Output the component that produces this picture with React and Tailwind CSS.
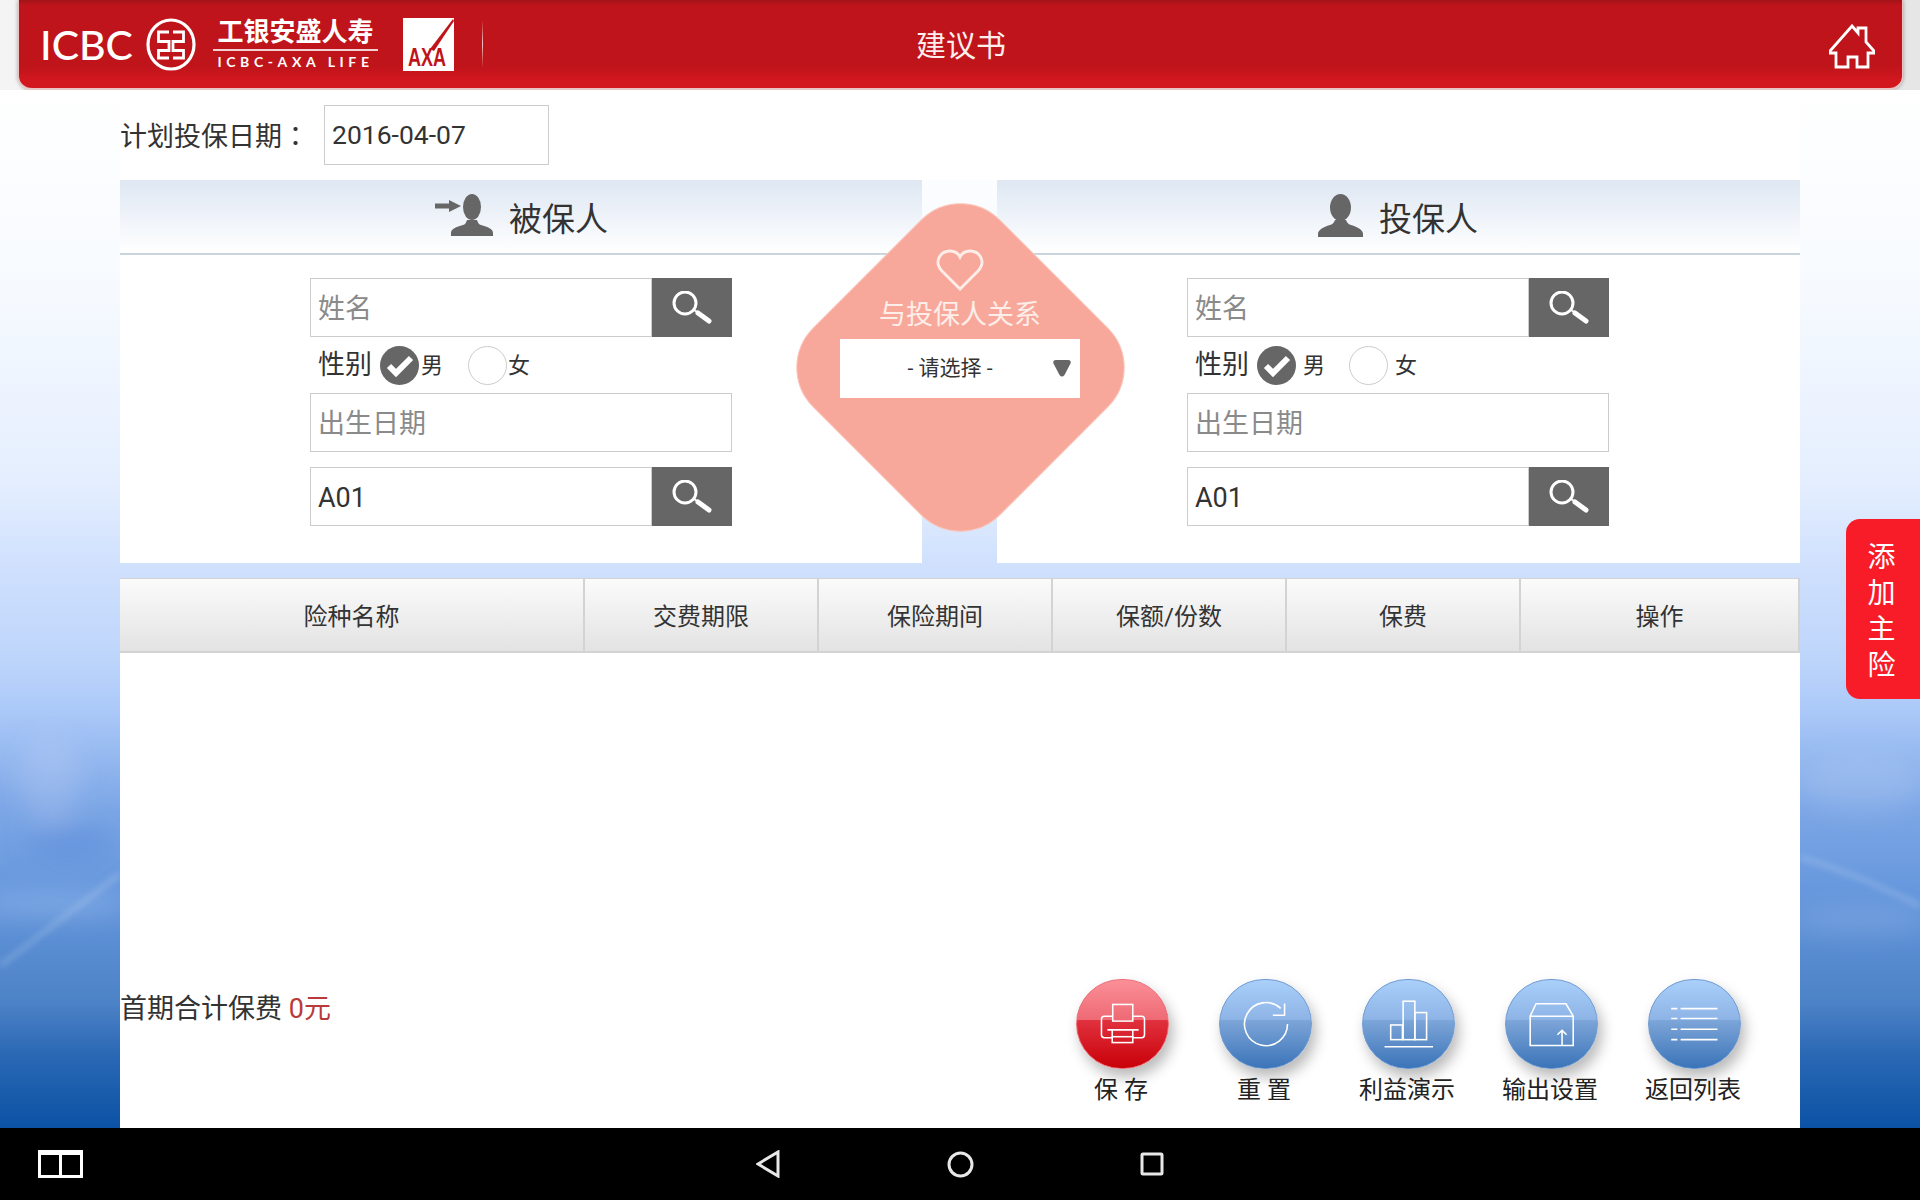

const Person = ({ className }) => (
  <svg viewBox="0 0 45 43" className={className} fill="#666">
    <ellipse cx="22.5" cy="13.5" rx="10.5" ry="13.5" />
    <path d="M0 43v-3c0-4 5-7 12-9c2-.5 4-2 5-5h11c1 3 3 4.500 5 5c7 2 12 5 12 9v3z" />
  </svg>
);
const SearchIcon = () => (
  <svg viewBox="0 0 40 34" className="w-[40px] h-[34px]" fill="none" stroke="#fff" strokeLinecap="round">
    <circle cx="13" cy="12" r="11" strokeWidth="3" />
    <path d="M22 19l4 2.5" strokeWidth="2" />
    <path d="M26 22l11 8" strokeWidth="5" />
  </svg>
);
const Input = ({ children, muted, search }) => (
  <div className="flex h-[59px] w-full">
    <div className={`flex-1 h-full border border-[#ccc] bg-white flex items-center pl-[7px] pt-[3px] text-[27px] ${muted ? "text-[#8a8a8a]" : "text-[#333]"}`}>{children}</div>
    {search && <div className="w-[80px] h-full bg-[#666] flex items-center justify-center"><SearchIcon /></div>}
  </div>
);
const Check = () => (
  <div className="w-[39px] h-[39px] rounded-full bg-[#666] flex items-center justify-center shrink-0">
    <svg viewBox="0 0 28 24" className="w-[28px] h-[24px]" fill="none" stroke="#fff" strokeWidth="6"><path d="M3 12l7 7L25 4" /></svg>
  </div>
);
const Form = ({ gap1, gap2, gap3 }) => (
  <div className="pl-[190px] pt-[23px] w-[612px]">
    <Input muted search>姓名</Input>
    <div className="flex items-center h-[39px] mt-[9px] pl-[8px] text-[#333]">
      <span className="text-[27px] w-[53px] shrink-0 leading-none whitespace-nowrap">性别</span>
      <span className={gap1}><Check /></span>
      <span className={`text-[22px] leading-none ${gap2}`}>男</span>
      <span className="w-[39px] h-[39px] rounded-full border border-[#ccc] bg-white shrink-0" />
      <span className={`text-[22px] leading-none ${gap3}`}>女</span>
    </div>
    <div className="mt-[8px]"><Input muted>出生日期</Input></div>
    <div className="mt-[15px]"><Input search>A01</Input></div>
  </div>
);
const Circle = ({ red, children, label }) => (
  <div className="w-[93px] flex flex-col items-center">
    <div className={`w-[93px] h-[90px] rounded-full border shadow-[4px_8px_14px_rgba(0,0,0,0.28)] overflow-hidden ${red
      ? "border-[#e8707a] bg-[linear-gradient(180deg,#fb8f98_0%,#ee6a74_45%,#e1323f_45%,#c90008_100%)]"
      : "border-[#6f9ad0] bg-[linear-gradient(180deg,#a9cffa_0%,#8db4e6_45%,#7ea6d9_45%,#3b74b8_100%)]"}`}>
      <svg viewBox="0 0 93 90" className="w-full h-full" fill="none" stroke="#fff" strokeWidth="1.6">{children}</svg>
    </div>
    <div className="mt-[5px] -ml-[3px] text-[24px] leading-[32px] text-[#222] whitespace-nowrap">{label}</div>
  </div>
);
const cols = [["险种名称", 465], ["交费期限", 234], ["保险期间", 234], ["保额/份数", 234], ["保费", 234], ["操作", 279]];

export default function App() {
  return (
    <div className="w-[1920px] h-[1200px] relative flex flex-col overflow-hidden font-['Roboto','Noto_Sans_CJK_SC',sans-serif]">
      <header className="h-[90px] shrink-0 bg-[linear-gradient(90deg,#f4f4f4,#e6e6e6_70%,#e6e6e6)] pl-[18px] pr-[17px] flex">
        <div className="flex-1 relative h-[90px] rounded-b-[14px] border-b-2 border-x border-[#e8c4c4] shadow-[0_0_4px_rgba(0,0,0,0.35)] bg-[linear-gradient(180deg,#a11318_0%,#bf141b_6%,#c0141b_76%,#d3171f_92%,#d3171f_100%)] flex items-center">
          <span className="ml-[21px] w-[92px] shrink-0 text-[41px] leading-none font-medium font-['Lato',sans-serif] text-white whitespace-nowrap">ICBC</span>
          <svg viewBox="0 0 50 53" className="ml-[14px] w-[50px] h-[53px]" fill="none" stroke="#fff">
            <ellipse cx="25" cy="26.5" rx="23" ry="24.5" strokeWidth="3.2" />
            <path d="M23 14H12.500V23.500H23V32.500H12.500V40H23M27 14H37.500V23.500H27V32.500H37.500V40H27" strokeWidth="2.8" />
          </svg>
          <div className="ml-[17px] w-[165px] flex flex-col items-center text-white">
            <span className="text-[26px] leading-[28px] font-bold whitespace-nowrap">工银安盛人寿</span>
            <span className="w-full h-[2px] bg-[#f0d0d0] mt-[3px]" />
            <span className="text-[14px] leading-[16px] mt-[3px] tracking-[4.6px] whitespace-nowrap font-bold font-['Lato',sans-serif]">ICBC-AXA LIFE</span>
          </div>
          <div className="ml-[25px] w-[51px] h-[53px] bg-white relative">
            <svg viewBox="0 0 51 53" className="w-full h-full overflow-visible">
              <path d="M50 1L27 31l4 2L51 3z" fill="#c0141b" />
              <text x="5" y="48" fontSize="26" fontWeight="700" textLength="38" lengthAdjust="spacingAndGlyphs" fill="#c0141b" fontFamily="Liberation Sans">AXA</text>
            </svg>
          </div>
          <div className="ml-[28px] w-px h-[48px] bg-[linear-gradient(180deg,#c0141b,#f2c8ca,#c0141b)]" />
          <div className="absolute left-[897px] top-[27px] text-[30px] leading-[38px] text-[#fdeeee]">建议书</div>
          <svg viewBox="0 0 46 45" className="absolute right-[27px] top-[24px] w-[46px] h-[45px]" fill="none" stroke="#fff" strokeWidth="2.8">
            <path d="M23 2L29 9V4H37V18L45 27V29H39V43H28V33H19V43H7V29H1V27Z" />
          </svg>
        </div>
      </header>

      <main className="flex-1 relative px-[120px] flex flex-col bg-[linear-gradient(180deg,#ffffff_0%,#f6faff_20%,#e4eefe_38%,#cfe0fd_46%,#bdd5fb_55%,#aac8f8_60%,#7da7e6_69%,#6496dc_78%,#4c82c6_88%,#2a68b4_93%,#0b52a5_100%)]">
        <svg className="absolute inset-0 w-[1920px] h-[1038px]" viewBox="0 0 1920 1038" fill="none">
          <defs><filter id="b"><feGaussianBlur stdDeviation="12" /></filter><filter id="c"><feGaussianBlur stdDeviation="3" /></filter></defs>
          <g filter="url(#b)">
            <ellipse cx="50" cy="690" rx="30" ry="45" fill="#dbe6fb" opacity="0.18" />
            <ellipse cx="70" cy="752" rx="45" ry="16" fill="#4f82d8" opacity="0.35" />
            <ellipse cx="50" cy="815" rx="80" ry="12" fill="#dbe6fb" opacity="0.22" />
            <ellipse cx="1860" cy="695" rx="60" ry="28" fill="#dbe6fb" opacity="0.16" />
            <ellipse cx="1860" cy="830" rx="70" ry="14" fill="#dbe6fb" opacity="0.15" />
          </g>
          <g filter="url(#c)" stroke="#e4edfb" strokeWidth="5" opacity="0.22">
            <path d="M0 876L120 784" />
            <path d="M1800 767Q1860 785 1920 816" />
          </g>
        </svg>

        <div className="relative h-[90px] shrink-0 bg-white flex items-center text-[27px] text-[#333]">
          <span className="w-[204px] pt-[2px] leading-none whitespace-nowrap">计划投保日期<span className="font-['Noto_Sans_CJK_TC']">：</span></span>
          <div className="w-[225px] h-[60px] border border-[#ccc] flex items-center pl-[7px] text-[26.5px]">2016-04-07</div>
        </div>

        <div className="relative h-[383px] shrink-0 flex justify-between">
          <section className="w-[802px] bg-white">
            <div className="h-[75px] border-b-2 border-[#cbd5df] bg-[linear-gradient(180deg,#dee7f3,#ffffff)] flex items-center pl-[315px]">
              <svg viewBox="0 0 58 42" className="w-[58px] h-[42px] -mt-[4px]" fill="#666">
                <path d="M0 9.500h14V6l12 6-12 6v-3.500H0z" />
                <ellipse cx="37" cy="13" rx="9" ry="13" />
                <path d="M16 42v-3c0-4 5-6 12-8c2-.5 3-2 4-5h10c1 3 2 4.500 4 5c7 2 12 4 12 8v3z" />
              </svg>
              <span className="ml-[16px] pt-[5px] text-[33px] leading-none text-[#333]">被保人</span>
            </div>
            <Form gap1="ml-[9px]" gap2="ml-[2px] w-[47px]" gap3="ml-[1px]" />
          </section>
          <section className="w-[803px] bg-white">
            <div className="h-[75px] border-b-2 border-[#cbd5df] bg-[linear-gradient(180deg,#dee7f3,#ffffff)] flex items-center pl-[321px]">
              <Person className="w-[45px] h-[43px] -mt-[3px]" />
              <span className="ml-[16px] pt-[5px] text-[33px] leading-none text-[#333]">投保人</span>
            </div>
            <Form gap1="ml-[9px]" gap2="ml-[7px] w-[46px]" gap3="ml-[7px]" />
          </section>
        </div>

        <div className="h-[15px] shrink-0" />

        <div className="relative flex-1 flex flex-col bg-white">
          <div className="flex h-[75px] shrink-0">
            {cols.map(([t, w]) => (
              <div key={t} style={{ width: w }} className="h-full pt-[3px] border-t border-b-2 border-r-2 border-[#d3d3d3] bg-[linear-gradient(180deg,#fbfbfb,#e3e3e3)] flex items-center justify-center text-[24px] text-[#333]">{t}</div>
            ))}
          </div>
          <div className="flex-1" />
          <div className="h-[149px] flex shrink-0">
            <div className="mt-[12px] text-[27px] leading-[36px] text-[#333] whitespace-nowrap">
              首期合计保费 <span className="text-[#b93a3a]">0元</span>
            </div>
            <div className="ml-auto mr-[59px] flex gap-[50px]">
              <Circle red label="保 存">
                <rect x="36.5" y="25" width="20.5" height="17" />
                <path d="M36 37H28q-3 0-3 3V56q0 3 3 3H36M57 37H66q3 0 3 3V56q0 3-3 3H57" />
                <path d="M31 51H63M36 51v7M57 51v7" />
                <rect x="36" y="58" width="21" height="6" />
              </Circle>
              <Circle label="重 置">
                <path d="M62 29A22 22 0 1 0 69 45" />
                <path d="M54 36H66V24" />
              </Circle>
              <Circle label="利益演示">
                <rect x="28.3" y="46" width="12" height="15" />
                <rect x="41" y="21.7" width="12" height="39.3" />
                <rect x="53" y="33.3" width="12" height="27.7" />
                <path d="M22 68.3H71.6" />
              </Circle>
              <Circle label="输出设置">
                <path d="M24.7 37H68.7V67H24.7ZM24.7 37L30.7 24.3H61.3L68.7 37" />
                <path d="M57.3 67V52M52.5 56L57.3 51.5L62 56" />
              </Circle>
              <Circle label="返回列表">
                <path d="M22.7 29.3H29M32.3 29.3H70M22.7 39.3H29M32.3 39.3H70M22.7 50.3H29M32.3 50.3H70M22.7 61H29M32.3 61H70" />
              </Circle>
            </div>
          </div>
        </div>

        <div className="absolute left-[795px] top-[113px] w-[330px] h-[328px] flex items-center justify-center">
          <div className="absolute w-[265px] h-[265px] rotate-45 rounded-[56px] bg-[#f8a89a] border border-[#fbc4ba]" />
          <div className="relative flex flex-col items-center h-[328px] w-full">
            <svg viewBox="0 0 48 42" className="mt-[46px] w-[48px] h-[42px]" fill="none" stroke="#fdeeea" strokeWidth="2.8">
              <path d="M24 40L6 22C-3 12 5 2 14 2c4 0 8 2 10 6c2-4 6-6 10-6c9 0 17 10 8 20Z" />
            </svg>
            <div className="mt-[8px] text-[27px] leading-[32px] text-[#fdeeea] whitespace-nowrap">与投保人关系</div>
            <div className="mt-[8px] w-[240px] h-[59px] bg-white relative flex items-center justify-center text-[21px] text-[#333] pr-[20px]">
              - 请选择 -
              <svg viewBox="0 0 18 17" className="absolute right-[9px] top-[21px] w-[18px] h-[17px]" fill="#666"><path d="M3 0H15Q18.500 0 17.500 3.500L11.500 15Q9 18 6.500 15L0.500 3.500Q-.5 0 3 0Z" /></svg>
            </div>
          </div>
        </div>
      </main>

      <div className="absolute right-0 top-[519px] w-[74px] h-[180px] rounded-l-[14px] bg-[#f81c28] flex flex-col items-center justify-center text-white text-[28px] leading-[36px] pr-[3px] pt-[5px]">
        <span>添</span><span>加</span><span>主</span><span>险</span>
      </div>

      <nav className="h-[72px] shrink-0 bg-black flex items-center relative">
        <div className="ml-[38px] w-[45px] h-[28px] border-[3px] border-t-[5px] border-white flex">
          <span className="flex-1 border-r-[3px] border-white" /><span className="flex-1" />
        </div>
        <svg viewBox="0 0 24 28" className="absolute left-[756px] top-[22px] w-[24px] h-[28px]" fill="none" stroke="#e8e8e8" strokeWidth="3"><path d="M22 2V26L2 14Z" /></svg>
        <svg viewBox="0 0 27 27" className="absolute left-[947px] top-[23px] w-[27px] h-[27px]" fill="none" stroke="#e8e8e8" strokeWidth="3"><circle cx="13.5" cy="13.5" r="11.5" /></svg>
        <svg viewBox="0 0 24 24" className="absolute left-[1140px] top-[24px] w-[24px] h-[24px]" fill="none" stroke="#e8e8e8" strokeWidth="3"><rect x="2" y="2" width="20" height="20" rx="1" /></svg>
      </nav>
    </div>
  );
}
